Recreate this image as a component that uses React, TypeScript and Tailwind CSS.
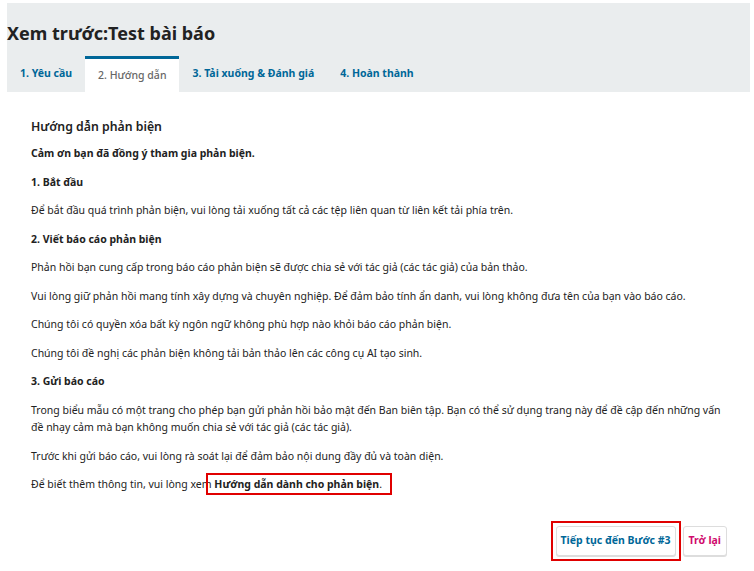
import React from "react";

const tabs = [
  { label: "1. Yêu cầu", active: false },
  { label: "2. Hướng dẫn", active: true },
  { label: "3. Tải xuống & Đánh giá", active: false },
  { label: "4. Hoàn thành", active: false },
];

export default function App() {
  return (
    <div className="w-[754px] h-[571px] bg-white pt-[3px] pl-[7px] pr-[4px] font-['Noto_Sans',sans-serif] text-[#222]">
      {/* header */}
      <div className="bg-[#eaedee] h-[89px] flex flex-col">
        <h1 className="text-[18px] font-bold leading-none mt-[21px] text-[#222]">Xem trước:Test bài báo</h1>
        <div className="flex mt-auto h-[36px]">
          {tabs.map((t) =>
            t.active ? (
              <div
                key={t.label}
                className="bg-white border-t-[3px] border-[#006798] px-[13px] flex items-center text-[10.5px] font-medium text-[#666]"
              >
                {t.label}
              </div>
            ) : (
              <div key={t.label} className="px-[13px] flex items-center text-[10.5px] font-bold text-[#006798]">
                {t.label}
              </div>
            )
          )}
        </div>
      </div>

      {/* body */}
      <div className="pl-[24px] pr-[23px] pt-[25px] text-[10.5px] leading-[17.5px]">
        <h2 className="text-[12.3px] font-semibold leading-[20px] mb-[8px]">Hướng dẫn phản biện</h2>
        <p className="font-bold mb-[11px]">Cảm ơn bạn đã đồng ý tham gia phản biện.</p>
        <p className="font-bold mb-[11px]">1. Bắt đầu</p>
        <p className="mb-[11px]">Để bắt đầu quá trình phản biện, vui lòng tải xuống tất cả các tệp liên quan từ liên kết tải phía trên.</p>
        <p className="font-bold mb-[11px]">2. Viết báo cáo phản biện</p>
        <p className="mb-[11px]">Phản hồi bạn cung cấp trong báo cáo phản biện sẽ được chia sẻ với tác giả (các tác giả) của bản thảo.</p>
        <p className="mb-[11px]">Vui lòng giữ phản hồi mang tính xây dựng và chuyên nghiệp. Để đảm bảo tính ẩn danh, vui lòng không đưa tên của bạn vào báo cáo.</p>
        <p className="mb-[11px]">Chúng tôi có quyền xóa bất kỳ ngôn ngữ không phù hợp nào khỏi báo cáo phản biện.</p>
        <p className="mb-[11px]">Chúng tôi đề nghị các phản biện không tải bản thảo lên các công cụ AI tạo sinh.</p>
        <p className="font-bold mb-[11px]">3. Gửi báo cáo</p>
        <p className="mb-[11px]">
          Trong biểu mẫu có một trang cho phép bạn gửi phản hồi bảo mật đến Ban biên tập. Bạn có thể sử dụng trang này để đề cập đến những vấn đề nhạy cảm mà bạn không muốn chia sẻ với tác giả (các tác giả).
        </p>
        <p className="mb-[11px]">Trước khi gửi báo cáo, vui lòng rà soát lại để đảm bảo nội dung đầy đủ và toàn diện.</p>
        <p>
          Để biết thêm thông tin, vui lòng xem{" "}
          <span className="relative">
            <b>Hướng dẫn dành cho phản biện</b>.
            <span className="absolute left-[-8px] right-[-10px] top-[-4px] bottom-[-4px] border-2 border-[#e00000]" />
          </span>
        </p>

        <div className="flex justify-end items-center gap-[7px] mt-[32px]">
          <div className="relative">
            <button className="h-[30px] px-[4px] bg-white border border-[#ddd] rounded-[3px] shadow-[0_1px_0_#ddd] text-[10.5px] font-bold text-[#006798]">
              Tiếp tục đến Bước #3
            </button>
            <span className="absolute left-[-5px] right-[-5px] top-[-5px] bottom-[-5px] border-2 border-[#e00000]" />
          </div>
          <button className="h-[30px] px-[5px] bg-white border border-[#ddd] rounded-[3px] shadow-[0_1px_0_#ddd] text-[10.5px] font-bold text-[#d00a6c]">
            Trở lại
          </button>
        </div>
      </div>
    </div>
  );
}
